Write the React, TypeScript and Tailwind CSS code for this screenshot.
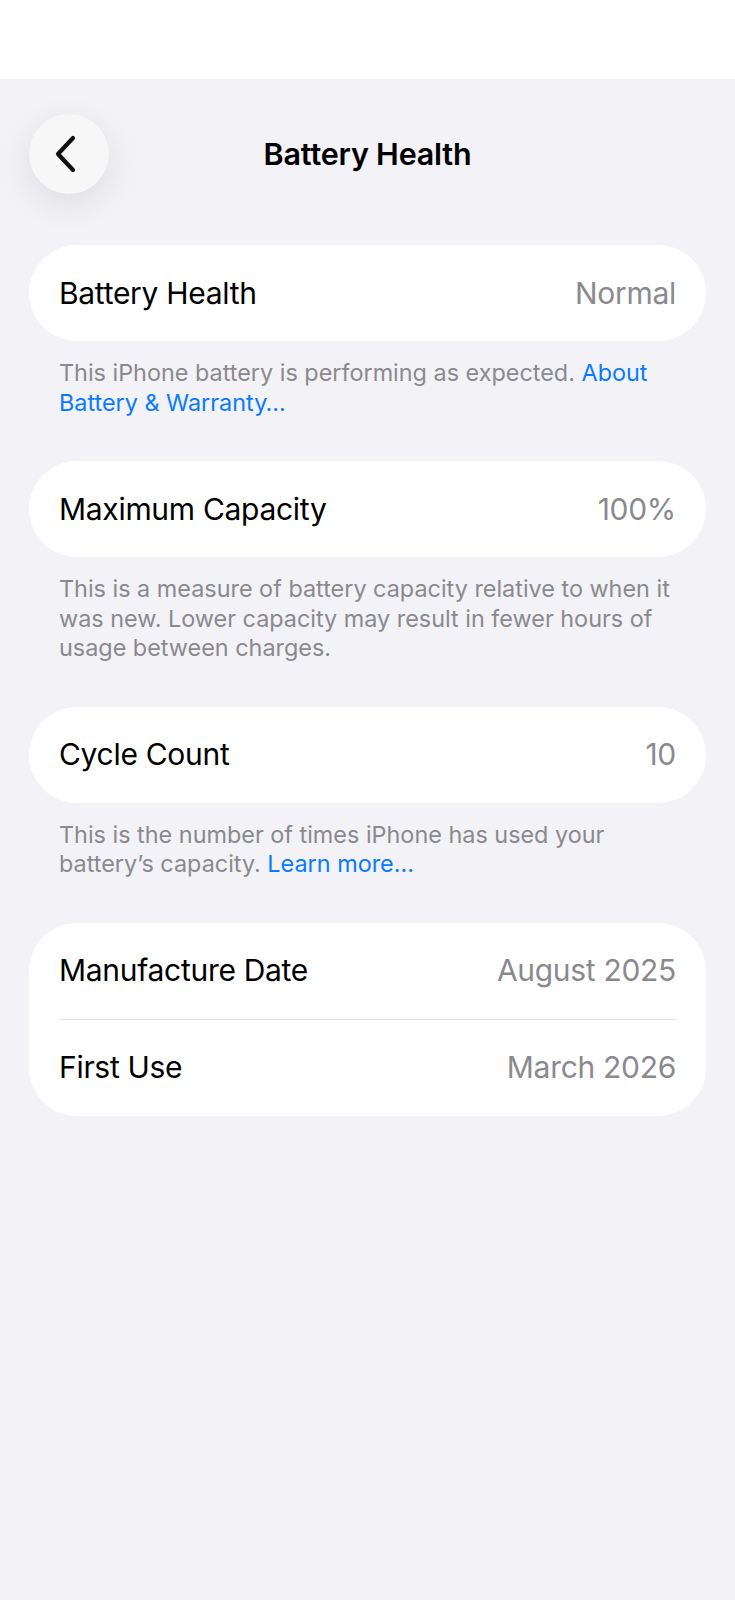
import React from 'react'

type Row = { label: string; value: string }

const font = { fontFamily: 'Inter, "Liberation Sans", Arial, sans-serif' }

function Card({ rows }: { rows: Row[] }) {
  return (
    <div className="rounded-[48px] bg-white">
      {rows.map((row, i) => (
        <div key={row.label}>
          {i > 0 && <div className="mx-[30px] h-px bg-[#e3e3e8]" />}
          <div className="flex h-[96px] items-center justify-between px-[30px] text-[30px] tracking-[-0.3px]">
            <span className="text-black">{row.label}</span>
            <span className="text-[#8a8a8e]">{row.value}</span>
          </div>
        </div>
      ))}
    </div>
  )
}

function Footer({ children }: { children: React.ReactNode }) {
  return (
    <p className="mt-[17px] mb-[44px] pl-[30px] pr-[14px] text-[23.4px] leading-[29.5px] text-[#8a8a8e]">
      {children}
    </p>
  )
}

export default function App() {
  return (
    <div className="min-h-screen bg-[#f2f2f7]" style={font}>
      <div className="h-[79px] bg-white" />

      <div className="px-[29px]">
        <div className="grid grid-cols-[80px_1fr_80px] items-center pt-[35px]">
          <button className="flex h-[80px] w-[80px] items-center justify-center rounded-full bg-[#f7f7f8] pr-[6px] shadow-[0_10px_34px_rgba(0,0,0,0.09)]">
            <svg width="24" height="40" viewBox="0 0 24 40" fill="none">
              <polyline points="19,4 4,20 19,36" stroke="#111" strokeWidth="4.2" strokeLinecap="round" strokeLinejoin="round" />
            </svg>
          </button>
          <h1 className="text-center text-[30.5px] font-semibold tracking-[-0.2px] text-black">Battery Health</h1>
          <div />
        </div>

        <div className="mt-[51px]">
          <Card rows={[{ label: 'Battery Health', value: 'Normal' }]} />
          <Footer>
            This iPhone battery is performing as expected. <span className="text-[#0a7aff]">About Battery &amp; Warranty…</span>
          </Footer>

          <Card rows={[{ label: 'Maximum Capacity', value: '100%' }]} />
          <Footer>
            This is a measure of battery capacity relative to when it was new. Lower capacity may result in fewer hours of usage between charges.
          </Footer>

          <Card rows={[{ label: 'Cycle Count', value: '10' }]} />
          <Footer>
            This is the number of times iPhone has used your battery’s capacity. <span className="text-[#0a7aff]">Learn more…</span>
          </Footer>

          <Card
            rows={[
              { label: 'Manufacture Date', value: 'August 2025' },
              { label: 'First Use', value: 'March 2026' },
            ]}
          />
        </div>
      </div>
    </div>
  )
}
